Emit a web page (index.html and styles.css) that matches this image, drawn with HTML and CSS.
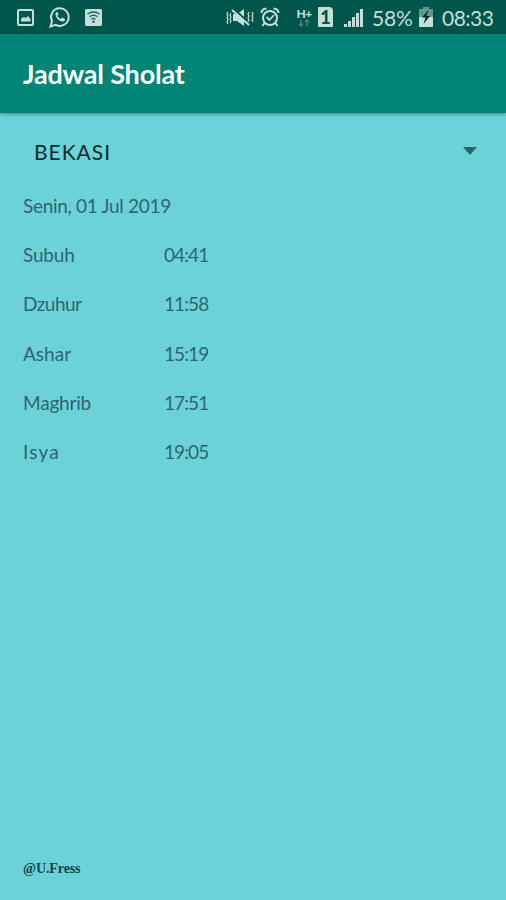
FILE: index.html
```
<!DOCTYPE html>
<html lang="id">
<head>
  <meta charset="UTF-8" />
  <title>Jadwal Sholat</title>
  <link rel="stylesheet" href="styles.css">
</head>
<body>
  <div class="statusbar">
    <svg class="status-icons" width="84" height="34" viewBox="0 0 84 34">
      <rect x="18" y="10" width="15" height="15" rx="1" fill="none" stroke="#c3dfd9" stroke-width="2" />
      <path d="M21 21.500v-3l3-1.500 2 1 2-2 2.500 3v2.500z" fill="#c3dfd9" />
      <path d="M50.500 26.500l1.500-5.500a8.800 8.800 0 1 1 3.700 3.800z" fill="none" stroke="#c3dfd9" stroke-width="2" />
      <path d="M56.500 12c-3.500 2.500 2.500 10.500 7 9.500 1.400-.5 1.700-1.700 1.500-2.600l-2.900-1.500-1.600 1.500c-1.400-.6-2.500-1.800-3.100-3.100l1.100-1.300-1-2.500z" fill="#c3dfd9" />
    </svg>
    <svg class="wifi-icon" width="20" height="34" viewBox="0 0 20 34">
      <rect x="1" y="9" width="17" height="17" rx="1.500" fill="#c3dfd9" />
      <path d="M3.500 14q6-4 12 0M5.500 16.800q4-3 8 0M7.500 19.300q2-1.500 4 0" fill="none" stroke="#24675e" stroke-width="1.400" />
      <circle cx="9.500" cy="21.800" r="1.300" fill="#24675e" />
    </svg>
    <svg class="mute-icon" width="30" height="34" viewBox="0 0 30 34">
      <path d="M7 14h4l7-5v17l-7-5H7z" fill="#c3dfd9" />
      <path d="M7 8l16 15" stroke="#00564a" stroke-width="2" />
      <path d="M6 10l17 15" stroke="#c3dfd9" stroke-width="2" />
      <path d="M2 12l-1 2 1 2-1 2 1 2-1 2 1 2M5 13l-1 2 1 2-1 2 1 2-1 2M23 12l-1 2 1 2-1 2 1 2-1 2M26 12l1 2-1 2 1 2-1 2 1 2" fill="none" stroke="#c3dfd9" stroke-width="1.200" />
    </svg>
    <svg class="alarm-icon" width="22" height="34" viewBox="0 0 22 34">
      <circle cx="11" cy="18" r="7" fill="none" stroke="#c3dfd9" stroke-width="2" />
      <path d="M2.500 13q0-4 5-4.500M19.500 13q0-4-5-4.500M5.500 23l-2 3M16.500 23l2 3" fill="none" stroke="#c3dfd9" stroke-width="2" />
      <path d="M7.500 17l3 3 4.500-5" fill="none" stroke="#c3dfd9" stroke-width="1.800" />
    </svg>
    <div class="network">
      <span class="network-type">H+</span>
      <svg width="12" height="8" viewBox="0 0 12 8">
        <path d="M3 1v6M1 5l2 2 2-2M9 7V1M7 3l2-2 2 2" fill="none" stroke="#4d8c82" stroke-width="1.300" />
      </svg>
    </div>
    <div class="sim">1</div>
    <svg class="signal-icon" width="20" height="34" viewBox="0 0 20 34">
      <path d="M1 27v-3h3v3zM5 27v-6h3v6zM9 27V17h3v10zM13 27V13h3v14zM17 27V9h3v18z" fill="#c3dfd9" />
    </svg>
    <span class="percent">58%</span>
    <svg class="battery-icon" width="16" height="34" viewBox="0 0 16 34">
      <path d="M5 7h6v2h4v8H1V9h4z" fill="#65978f" />
      <path d="M1 17h14v10H1z" fill="#c3dfd9" />
      <path d="M10.500 10L4 17.500h3.500L5.500 24l6.500-8H8.500z" fill="#082d29" />
    </svg>
    <span class="clock">08:33</span>
  </div>

  <div class="toolbar">
    <h1>Jadwal Sholat</h1>
  </div>

  <div class="content">
    <div class="spinner">
      <span class="kota">BEKASI</span>
      <span class="arrow"></span>
    </div>

    <div class="tanggal">Senin, 01 Jul 2019</div>

    <div class="jadwal">
      <div class="row"><span class="nama subuh">Subuh</span><span class="jam">04:41</span></div>
      <div class="row"><span class="nama dzuhur">Dzuhur</span><span class="jam">11:58</span></div>
      <div class="row"><span class="nama ashar">Ashar</span><span class="jam">15:19</span></div>
      <div class="row"><span class="nama maghrib">Maghrib</span><span class="jam">17:51</span></div>
      <div class="row"><span class="nama isya">Isya</span><span class="jam">19:05</span></div>
    </div>

    <div class="footer">@U.Fress</div>
  </div>
</body>
</html>
```
FILE: styles.css
```
* {
  box-sizing: border-box;
}

body {
  display: flex;
  flex-direction: column;
  height: 900px;
  margin: 0;
  overflow: hidden;
  background-color: #6bd3d7;
  font-family: 'Lato', sans-serif;
  color: #2c6670;
  white-space: nowrap;
}

.statusbar {
  display: flex;
  align-items: center;
  flex: none;
  height: 34px;
  background-color: #00564a;
  color: #c3dfd9;
}

.statusbar svg {
  flex: none;
}

.wifi-icon {
  margin-right: 122px;
}

.mute-icon {
  margin-right: 3px;
}

.alarm-icon {
  margin-right: 15px;
}

.network {
  display: flex;
  flex-direction: column;
  align-items: center;
  width: 16px;
  margin-right: 6px;
}

.network-type {
  font-size: 12px;
  font-weight: 900;
  line-height: 11px;
  letter-spacing: -0.5px;
}

.sim {
  width: 15px;
  height: 20px;
  margin-right: 10px;
  border-radius: 1px 4px 1px 1px;
  background-color: #c3dfd9;
  color: #00564a;
  font-size: 18px;
  font-weight: 900;
  line-height: 20px;
  text-align: center;
}

.signal-icon {
  margin-right: 9px;
}

.percent {
  width: 46px;
  font-size: 21px;
  letter-spacing: -0.2px;
}

.clock {
  margin-left: 8px;
  font-size: 21px;
  letter-spacing: -0.5px;
}

.toolbar {
  z-index: 1;
  display: flex;
  align-items: center;
  flex: none;
  height: 79px;
  padding-left: 23px;
  background-color: #008577;
  box-shadow: 0 1px 4px rgba(0, 0, 0, 0.4);
}

h1 {
  margin: 0;
  color: #fff;
  font-size: 27px;
  font-weight: bold;
  letter-spacing: -0.2px;
}

.content {
  display: flex;
  flex-direction: column;
  flex: 1;
  padding: 14px 23px 23px;
}

.spinner {
  display: flex;
  align-items: center;
  justify-content: space-between;
  height: 50px;
  padding: 0 6px 2px 11px;
}

.kota {
  color: #102b30;
  font-size: 21px;
  letter-spacing: 1px;
}

.arrow {
  border: 7px solid transparent;
  border-top: 8px solid #28636b;
  border-bottom: 0;
}

.tanggal {
  height: 53px;
  line-height: 58px;
  font-size: 19px;
  letter-spacing: -0.3px;
}

.row {
  display: flex;
  align-items: center;
  height: 49.3px;
  font-size: 19px;
}

.nama {
  width: 141px;
}

.subuh,
.maghrib {
  letter-spacing: -0.2px;
}

.dzuhur {
  letter-spacing: -0.5px;
}

.isya {
  letter-spacing: 1.2px;
}

.jam {
  letter-spacing: -0.9px;
}

.footer {
  margin-top: auto;
  color: #174249;
  font-family: 'Liberation Serif', serif;
  font-size: 14px;
  font-weight: bold;
  letter-spacing: -0.1px;
}
```
